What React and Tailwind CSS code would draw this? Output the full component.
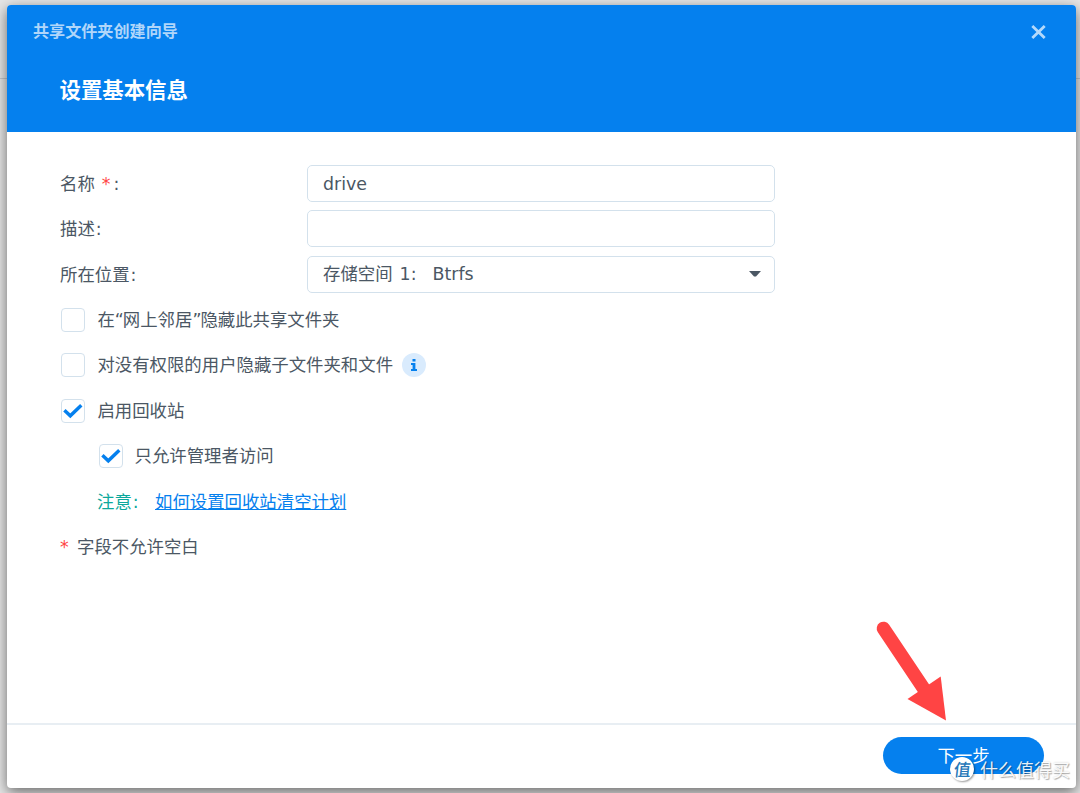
import { useState } from 'react';
import clsx from 'clsx';

function Row({ label, required, children }) {
  return (
    <div className="flex h-[45.5px] items-center">
      <div className="flex w-[247px] shrink-0 items-center pt-[2px] whitespace-pre">
        <span>{label}</span>
        {required && <span className="ml-[7px] text-[#ff4545]">*</span>}
        <span className={required ? 'ml-[3px]' : 'ml-px'}>:</span>
      </div>
      {children}
    </div>
  );
}

function Checkbox({ checked, onChange, indent, children }) {
  return (
    <div className={clsx('flex h-[45.5px] items-center', indent ? 'pl-[38.5px]' : 'pl-[1.4px]')}>
      <button
        type="button"
        role="checkbox"
        aria-checked={checked}
        onClick={() => onChange(!checked)}
        className="flex size-6 shrink-0 items-center justify-center rounded-[4px] border border-[#d3e1ec] bg-white"
      >
        {checked && (
          <svg width="20" height="16" viewBox="0 0 20 16" fill="none">
            <path d="M1.4 7.2 7.3 12.8 18.3 2.2" stroke="#0580ee" strokeWidth="3.4" />
          </svg>
        )}
      </button>
      <div className="ml-[12px] flex items-center">{children}</div>
    </div>
  );
}

export default function App() {
  const [name, setName] = useState('drive');
  const [desc, setDesc] = useState('');
  const [hideNetwork, setHideNetwork] = useState(false);
  const [hideSub, setHideSub] = useState(false);
  const [recycle, setRecycle] = useState(true);
  const [adminOnly, setAdminOnly] = useState(true);

  const field = 'h-[37px] w-[468px] rounded-[5px] border border-[#d3e1ec] bg-white px-[15px] outline-none';

  return (
    <div className="relative h-[793px] w-[1080px] overflow-hidden bg-[#e6e6e6] pt-[5px] pl-[7px] font-['DejaVu_Sans','Noto_Sans_CJK_SC',sans-serif] text-[17.4px] leading-none text-[#4b5764]">
      {/* edge of the window behind */}
      <div className="absolute top-[78px] left-0 h-px w-full bg-[#c3c6cc]" />

      <div className="relative flex h-[783px] w-[1069px] flex-col overflow-hidden rounded-[4px] bg-white shadow-[0_4px_14px_rgba(0,0,0,0.55)]">
        {/* Header */}
        <header className="h-[127px] shrink-0 bg-[#0580ee] pr-[30px] pl-[26px]">
          <div className="flex h-[54px] items-center justify-between font-bold text-[#b0d6fa]">
            <span className="text-[16.1px]">共享文件夹创建向导</span>
            <button type="button" aria-label="关闭">
              <svg width="15" height="14" viewBox="0 0 15 14" fill="none">
                <path d="M1.3 1 13.7 13M13.7 1 1.3 13" stroke="#b4d9fb" strokeWidth="2.8" />
              </svg>
            </button>
          </div>
          <h1 className="mt-[21px] ml-[26.5px] text-[21.4px] font-bold text-white">设置基本信息</h1>
        </header>

        {/* Form */}
        <main className="flex-1 pt-[28.6px] pl-[53px]">
          <Row label="名称" required>
            <input className={clsx(field, 'pt-px')} value={name} onChange={e => setName(e.target.value)} />
          </Row>
          <Row label="描述">
            <input className={field} value={desc} onChange={e => setDesc(e.target.value)} />
          </Row>
          <Row label="所在位置">
            <div className={clsx(field, 'flex items-center justify-between pr-[13px]')}>
              <span className="pt-px whitespace-pre">
                存储空间<span className="ml-[7px]">1:</span><span className="ml-[16px]">Btrfs</span>
              </span>
              <svg width="12" height="6" viewBox="0 0 12 6">
                <path d="M0 0h12L7 5.6H5z" fill="#4b5764" />
              </svg>
            </div>
          </Row>

          <Checkbox checked={hideNetwork} onChange={setHideNetwork}>
            <span className="pt-px">
              在<span className="inline-block w-[8px] tracking-[-1px]">“</span>网上邻居<span className="inline-block w-[8px] tracking-[-1px]">”</span>隐藏此共享文件夹
            </span>
          </Checkbox>
          <Checkbox checked={hideSub} onChange={setHideSub}>
            <span className="pt-px">对没有权限的用户隐藏子文件夹和文件</span>
            <span className="ml-[9px] flex size-6 items-center justify-center rounded-full bg-[#d9ebfd]">
              <svg width="6" height="12" viewBox="0 0 6 12" fill="#0580ee">
                <path d="M1.5 0h3v2.6h-3zM0 4h4.4v6H6v2H0v-2h1.6V6H0z" />
              </svg>
            </span>
          </Checkbox>
          <Checkbox checked={recycle} onChange={setRecycle}>
            <span className="pt-px">启用回收站</span>
          </Checkbox>
          <Checkbox checked={adminOnly} onChange={setAdminOnly} indent>
            <span className="pt-px">只允许管理者访问</span>
          </Checkbox>

          <div className="flex h-[45.5px] items-center pt-[2px] pl-[37px]">
            <span className="w-[58px] text-[#0ca89c]">注意<span className="ml-px">:</span></span>
            <a href="#" className="text-[#0580ee] underline decoration-1 underline-offset-[1px] [text-decoration-skip-ink:none]">如何设置回收站清空计划</a>
          </div>
          <div className="flex h-[45.5px] items-center pt-px">
            <span className="w-[17px] text-[#ff4545]">*</span>
            <span>字段不允许空白</span>
          </div>
        </main>

        {/* Footer */}
        <footer className="flex h-[65px] shrink-0 items-start justify-end border-t-2 border-[#e8eef3] pt-[12px] pr-[32px]">
          <button type="button" className="h-[37px] w-[161px] rounded-full bg-[#0580ee] pt-[2px] text-white">下一步</button>
        </footer>
      </div>

      {/* Pointer to the next button */}
      <svg className="absolute top-[615px] left-[870px]" width="85" height="110" viewBox="0 0 85 110" fill="#ff4444">
        <path d="M13.5 13.5 56 77" stroke="#ff4444" strokeWidth="13.6" strokeLinecap="round" />
        <path d="M70.7 61.5 76 105.5 37.5 84z" />
      </svg>

      {/* Watermark */}
      <div className="absolute top-[757px] left-[950px] flex items-center font-['Noto_Sans_CJK_SC',sans-serif]">
        <span className="flex size-6 items-center justify-center rounded-full bg-white text-[17px] font-medium text-[#2878b8] shadow-[1px_1px_2px_rgba(0,0,0,0.4)]">
          <span className="-mt-[2px] -skew-x-6">值</span>
        </span>
        <span className="ml-[6px] text-[18px] whitespace-nowrap text-white/90 [text-shadow:1px_1px_1px_rgba(0,0,0,0.3),0_0_2px_rgba(0,0,0,0.2)]">什么值得买</span>
      </div>
    </div>
  );
}
